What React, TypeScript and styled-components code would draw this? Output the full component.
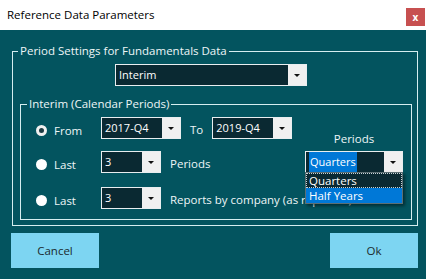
import React from 'react';
import styled, { createGlobalStyle } from 'styled-components';

const GlobalStyle = createGlobalStyle`
  html, body {
    margin: 0;
    padding: 0;
  }
  body {
    font-family: "Open Sans", "Noto Sans", sans-serif;
    font-size: 11px;
    color: #f2f6f7;
  }
`;

const Window = styled.div`
  width: 426px;
  height: 279px;
  display: flex;
  flex-direction: column;
  overflow: hidden;
  background: #03545f;
`;

const TitleBar = styled.div`
  height: 30px;
  flex: none;
  box-sizing: border-box;
  display: flex;
  justify-content: space-between;
  padding: 0 1px 0 7px;
  background: #ffffff;
  color: #000;
`;

const Title = styled.span`
  line-height: 30px;
  font-size: 11.5px;
`;

const CloseButton = styled.button`
  width: 19px;
  height: 18px;
  margin-top: 8px;
  padding: 0;
  border: none;
  background: #c75050;
  color: #fff;
  font-family: inherit;
  font-size: 10px;
  font-weight: 700;
  line-height: 18px;
`;

const Body = styled.div`
  flex: 1;
  padding: 13px 8px 0 12px;
`;

const Group = styled.fieldset<{ $inner?: boolean }>`
  margin: ${(p) => (p.$inner ? '10px 0 0 2px' : '0')};
  padding: ${(p) => (p.$inner ? '5px 8px 10px 15px' : '5px')};
  border: 1px solid #d6eef0;
  min-width: 0;
`;

const Legend = styled.legend<{ $shift?: number }>`
  padding: 0 2px;
  margin-left: ${(p) => p.$shift ?? 0}px;
  line-height: 16px;
  font-size: 11.5px;
  color: #eef6f7;
`;

const TopRow = styled.div`
  display: flex;
  padding-left: 97px;
`;

const Combo = styled.div<{ $w: number }>`
  position: relative;
  width: ${(p) => p.$w}px;
  height: 22px;
  flex: none;
  box-sizing: border-box;
  display: flex;
  border: 1px solid #e9eef0;
  background: #0a2932;
`;

const ComboText = styled.div`
  flex: 1;
  padding: 0 3px;
  line-height: 19px;
  color: #fff;
  white-space: nowrap;
  overflow: hidden;
`;

const Highlight = styled.span`
  background: #0078d7;
  color: #fff;
  padding: 2px 1px 3px;
`;

const ComboButton = styled.div`
  width: 18px;
  flex: none;
  background: #f0f0f0;
  display: flex;
  align-items: center;
  justify-content: center;

  &::after {
    content: '';
    border-left: 3px solid transparent;
    border-right: 3px solid transparent;
    border-top: 3px solid #111;
    margin-top: 1px;
  }
`;

const DropList = styled.ul`
  position: absolute;
  top: 100%;
  left: -1px;
  right: -1px;
  margin: 0;
  padding: 0;
  list-style: none;
  border: 1px solid #5c6f74;
  background: #0a2932;
  box-shadow: 2px 2px 3px rgba(0, 0, 0, 0.45);
  z-index: 2;
`;

const DropItem = styled.li<{ $selected?: boolean; $focused?: boolean }>`
  height: 15px;
  line-height: 13px;
  padding: 0 2px;
  box-sizing: border-box;
  font-size: 11.5px;
  color: #fff;
  background: ${(p) => (p.$selected ? '#0078d7' : '#0a2932')};
  border: 1px dotted ${(p) => (p.$focused ? '#c9d3d6' : 'transparent')};
`;

const PeriodGrid = styled.div`
  display: grid;
  grid-template-columns: 1fr 98px;
  grid-template-rows: 22px 12px 22px 14px 22px;
`;

const Row = styled.div<{ $row: number; $span?: boolean }>`
  grid-row: ${(p) => p.$row};
  grid-column: ${(p) => (p.$span ? '1 / -1' : '1')};
  display: flex;
  align-items: center;
  gap: 9px;
`;

const RadioOption = styled.label`
  width: 65px;
  flex: none;
  margin-right: -9px;
  display: flex;
  align-items: center;
  gap: 7px;
  padding-top: 4px;
  font-size: 11.5px;
  color: #eef6f7;
`;

const Radio = styled.span<{ $checked?: boolean }>`
  width: 11px;
  height: 11px;
  box-sizing: border-box;
  border-radius: 50%;
  background: ${(p) => (p.$checked ? '#1d3b42' : '#ffffff')};
  border: ${(p) => (p.$checked ? '3px solid #f0f0f0' : 'none')};
`;

const Caption = styled.span<{ $drop?: number }>`
  padding-top: ${(p) => p.$drop ?? 3}px;
  white-space: nowrap;
  font-size: 11.5px;
  color: #eef6f7;
`;

const PeriodsLabel = styled.div`
  grid-row: 1 / 3;
  grid-column: 2;
  align-self: end;
  margin-bottom: 4px;
  line-height: 16px;
  font-size: 11.5px;
  text-align: center;
  color: #eef6f7;
`;

const PeriodsCombo = styled.div`
  grid-row: 3;
  grid-column: 2;
  position: relative;
  z-index: 2;
`;

const ButtonRow = styled.div`
  display: flex;
  justify-content: space-between;
  margin: 7px 0 0 -1px;
`;

const ActionButton = styled.button`
  width: 88px;
  height: 35px;
  padding: 0;
  border: none;
  background: #7dd5f2;
  color: #1b2a2e;
  font-family: inherit;
  font-size: 11.5px;
`;

export default function App() {
  return (
    <>
      <GlobalStyle />
      <Window>
        <TitleBar>
          <Title>Reference Data Parameters</Title>
          <CloseButton>x</CloseButton>
        </TitleBar>
        <Body>
          <Group>
            <Legend>Period Settings for Fundamentals Data</Legend>
            <TopRow>
              <Combo $w={192}>
                <ComboText>Interim</ComboText>
                <ComboButton />
              </Combo>
            </TopRow>
            <Group $inner>
              <Legend $shift={-9}>Interim (Calendar Periods)</Legend>
              <PeriodGrid>
                <Row $row={1}>
                  <RadioOption>
                    <Radio $checked />
                    From
                  </RadioOption>
                  <Combo $w={80}>
                    <ComboText>2017-Q4</ComboText>
                    <ComboButton />
                  </Combo>
                  <Caption>To</Caption>
                  <Combo $w={80}>
                    <ComboText>2019-Q4</ComboText>
                    <ComboButton />
                  </Combo>
                </Row>
                <PeriodsLabel>Periods</PeriodsLabel>
                <Row $row={3}>
                  <RadioOption>
                    <Radio />
                    Last
                  </RadioOption>
                  <Combo $w={60}>
                    <ComboText>3</ComboText>
                    <ComboButton />
                  </Combo>
                  <Caption>Periods</Caption>
                </Row>
                <PeriodsCombo>
                  <Combo $w={98}>
                    <ComboText>
                      <Highlight>Quarters</Highlight>
                    </ComboText>
                    <ComboButton />
                    <DropList>
                      <DropItem $focused>Quarters</DropItem>
                      <DropItem $selected>Half Years</DropItem>
                    </DropList>
                  </Combo>
                </PeriodsCombo>
                <Row $row={5} $span>
                  <RadioOption>
                    <Radio />
                    Last
                  </RadioOption>
                  <Combo $w={60}>
                    <ComboText>3</ComboText>
                    <ComboButton />
                  </Combo>
                  <Caption>Reports by company (as reported)</Caption>
                </Row>
              </PeriodGrid>
            </Group>
          </Group>
          <ButtonRow>
            <ActionButton>Cancel</ActionButton>
            <ActionButton>Ok</ActionButton>
          </ButtonRow>
        </Body>
      </Window>
    </>
  );
}
